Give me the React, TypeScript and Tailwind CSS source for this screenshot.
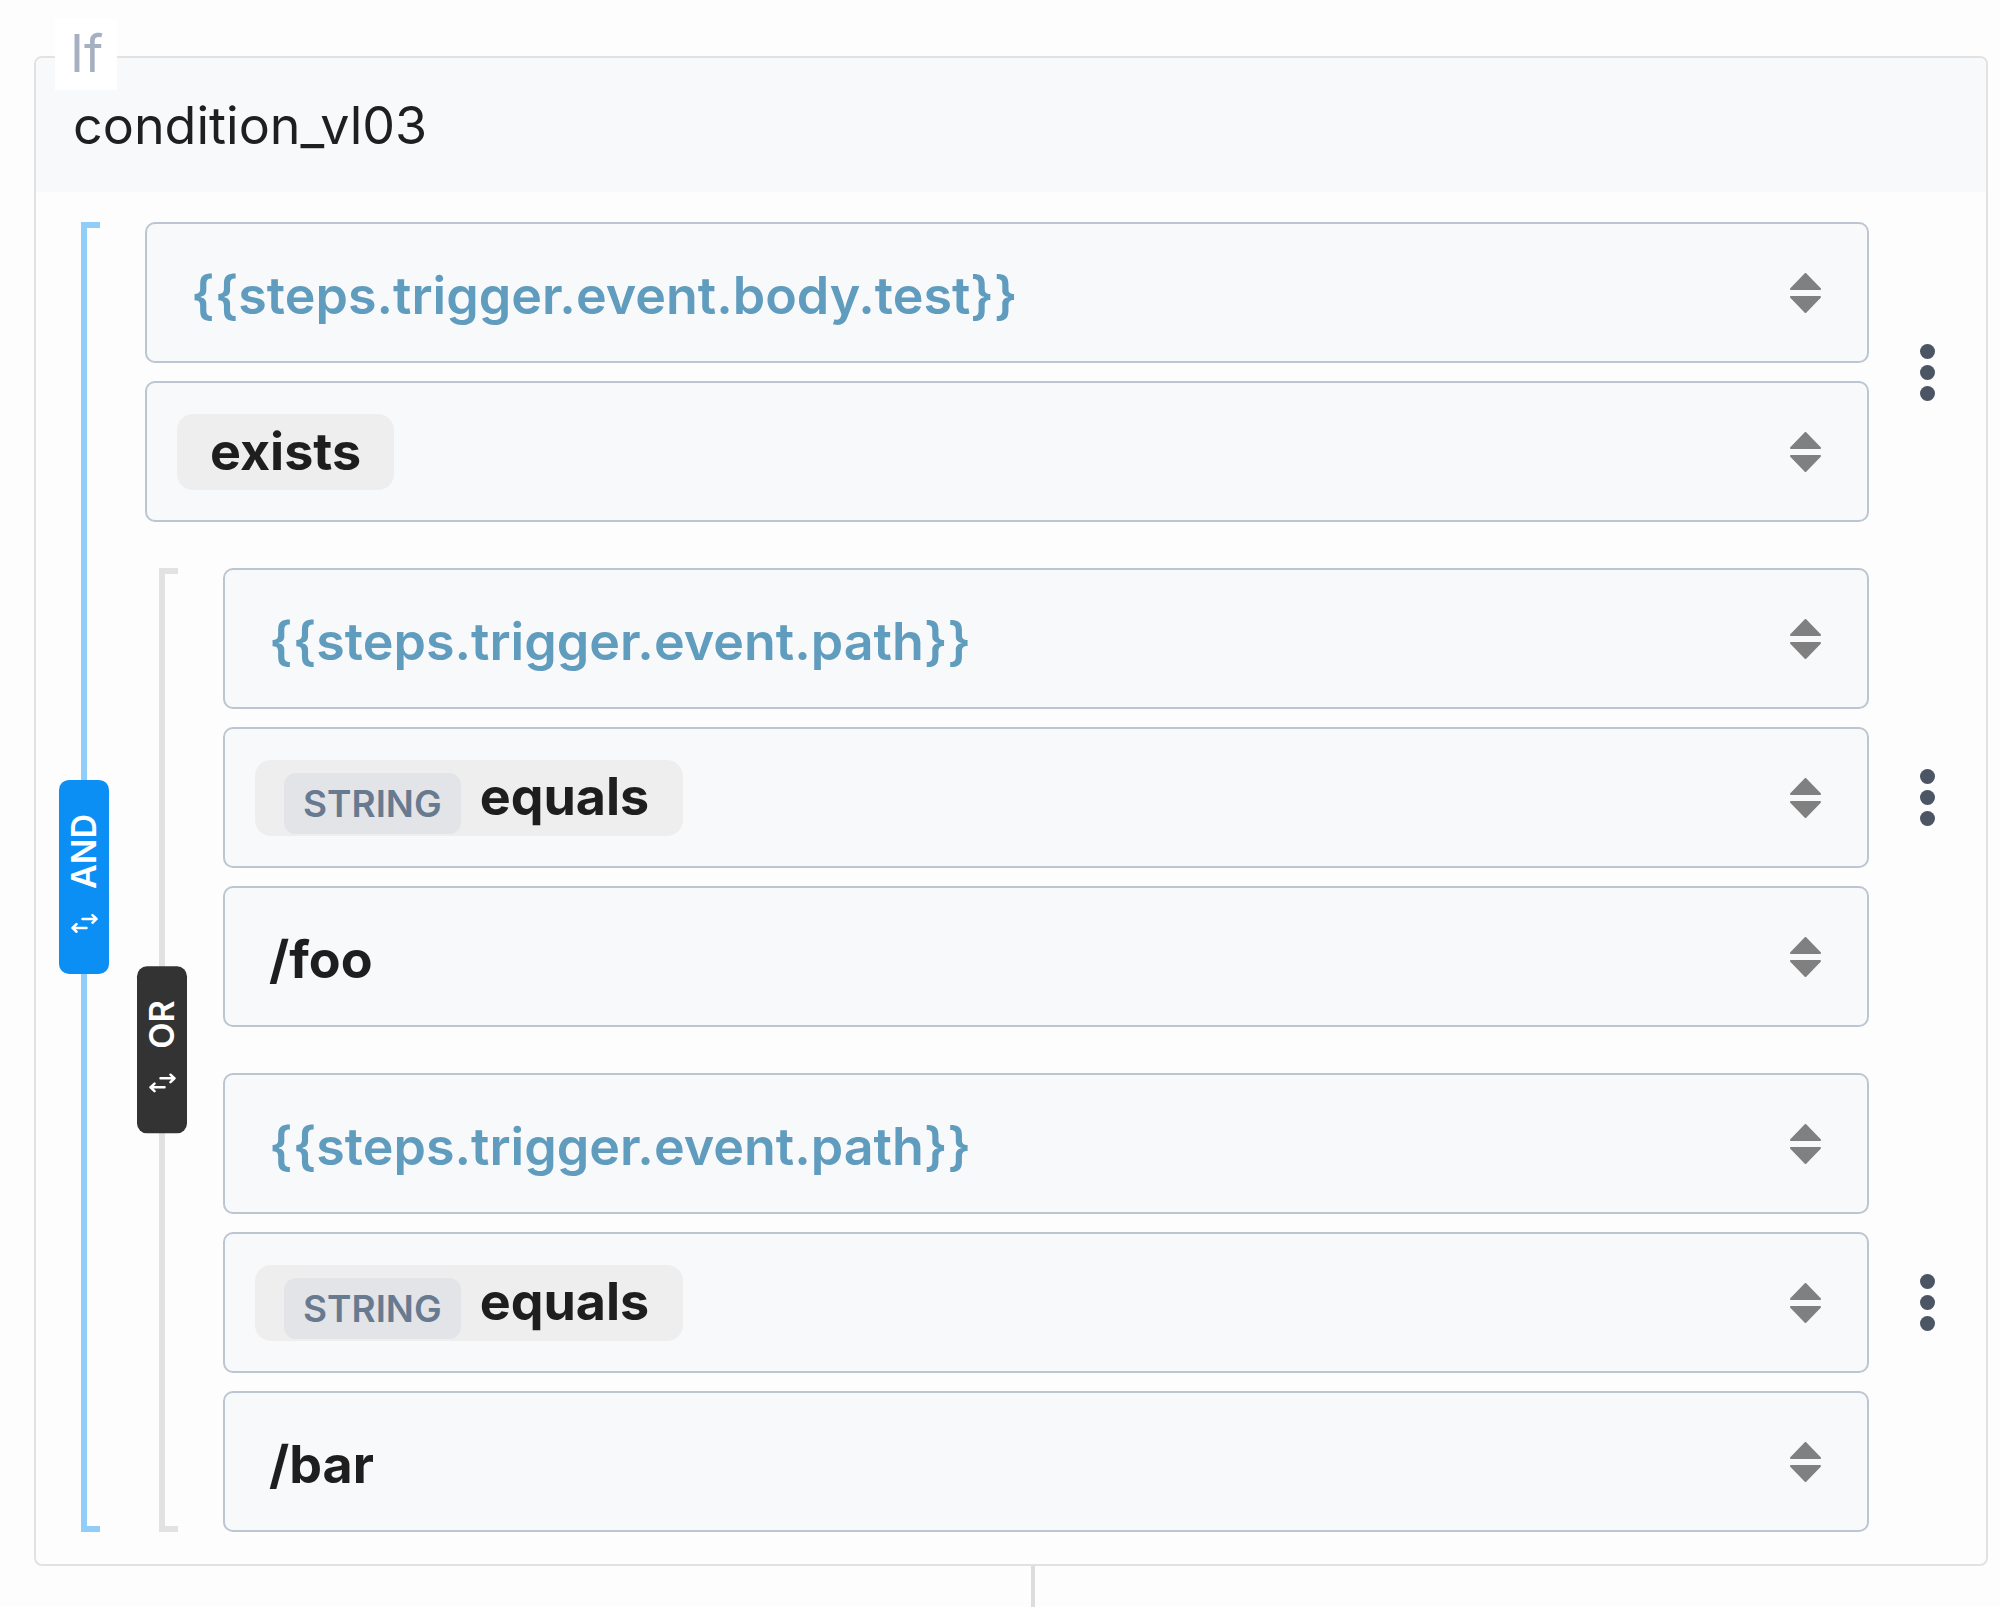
import React from "react";

const Chevrons = () => (
  <svg width="31" height="40" viewBox="0 0 31 40" className="shrink-0">
    <path d="M15.5 1 L30 16 L1 16 Z" fill="#808080" stroke="#808080" strokeWidth="2" strokeLinejoin="round" />
    <path d="M1 24 L30 24 L15.5 39 Z" fill="#808080" stroke="#808080" strokeWidth="2" strokeLinejoin="round" />
  </svg>
);

const SwapIcon = () => (
  <svg width="27" height="20" viewBox="0 0 27 20" fill="none" stroke="white" strokeWidth="2.5" strokeLinecap="round" strokeLinejoin="round" className="shrink-0">
    <path d="M11.5 5H25.5M21.5 1.2L25.5 5L21.5 8.8" />
    <path d="M15.5 14H1.5M5.5 10.2L1.5 14L5.5 17.8" />
  </svg>
);

const Dots = () => (
  <div className="w-[117px] shrink-0 flex flex-col items-center justify-center gap-[6px]">
    <div className="w-[15px] h-[15px] rounded-full bg-[#4b5563]" />
    <div className="w-[15px] h-[15px] rounded-full bg-[#4b5563]" />
    <div className="w-[15px] h-[15px] rounded-full bg-[#4b5563]" />
  </div>
);

const Field = ({ children }: { children: React.ReactNode }) => (
  <div className="h-[141px] border-2 border-[#bcc6d1] rounded-[10px] bg-[#f8f9fb] flex items-center justify-between pl-[30px] pr-[46px]">
    <div className="flex items-center">{children}</div>
    <Chevrons />
  </div>
);

const Expr = ({ text }: { text: string }) => (
  <span className="pl-[14px] pt-[7px] text-[52px] leading-[66px] font-semibold text-[#609cbd]">{text}</span>
);

const Plain = ({ text }: { text: string }) => (
  <span className="pl-[14px] pt-[7px] text-[52px] leading-[66px] font-bold text-[#1e1e1e]">{text}</span>
);

const Exists = () => (
  <div className="h-[76px] px-[33px] rounded-[16px] bg-[#eeeeee] flex items-center">
    <span className="text-[52px] leading-[66px] font-bold text-[#1e1e1e]">exists</span>
  </div>
);

const StringEquals = () => (
  <div className="h-[76px] pb-[2px] pl-[29px] pr-[34px] gap-[19px] rounded-[16px] bg-[#eeeeee] flex items-end">
    <div className="h-[61px] px-[19px] rounded-[12px] bg-[#e2e4e8] flex items-center">
      <span className="text-[37px] leading-[45px] font-semibold text-[#687a8f]">STRING</span>
    </div>
    <span className="self-center text-[52px] leading-[66px] font-bold text-[#1e1e1e]">equals</span>
  </div>
);

const Badge = ({ label, bg }: { label: string; bg: string }) => (
  <div className={`absolute left-0 top-1/2 -translate-y-1/2 w-[50px] rounded-[10px] ${bg} flex flex-col items-center pt-[34px] pb-[40px] gap-[25px]`}>
    <span className="[writing-mode:vertical-rl] rotate-180 text-white font-semibold text-[34px] leading-[50px]">{label}</span>
    <SwapIcon />
  </div>
);

const Group = ({
  label,
  lineColor,
  badgeBg,
  children,
}: {
  label: string;
  lineColor: string;
  badgeBg: string;
  children: React.ReactNode;
}) => (
  <div className="flex gap-[28px]">
    <div className="relative w-[50px] shrink-0">
      <div className={`ml-[22px] h-full w-[19px] border-y-[6px] border-l-[6px] ${lineColor}`} />
      <Badge label={label} bg={badgeBg} />
    </div>
    <div className="flex-1 min-w-0 flex flex-col gap-[46px]">{children}</div>
  </div>
);

const Rule = ({ children }: { children: React.ReactNode }) => (
  <div className="flex">
    <div className="flex-1 min-w-0 ml-[8px] flex flex-col gap-[18px]">{children}</div>
    <Dots />
  </div>
);

export default function App() {
  return (
    <div className="min-h-screen bg-[#fdfdfd] pt-[56px] pl-[34px] pr-[12px] font-['Inter',sans-serif]">
      <div className="relative border-2 border-[#e2e2e2] rounded-[8px]">
        <div className="absolute z-10 left-[19px] top-[-40px] h-[72px] w-[62px] bg-white pl-[15px] text-[52px] leading-[72px] text-[#a5b1c0]">
          If
        </div>
        <div className="h-[134px] pt-[38px] pl-[37px] bg-[#f8f9fa] rounded-t-[6px] text-[52px] leading-[60px] text-[#1f1f1f]">
          condition_vl03
        </div>
        <div className="pt-[30px] pb-[32px] pl-[23px]">
          <Group label="AND" lineColor="border-[#90cdf9]" badgeBg="bg-[#0b8ff5]">
            <Rule>
              <Field>
                <Expr text="{{steps.trigger.event.body.test}}" />
              </Field>
              <Field>
                <Exists />
              </Field>
            </Rule>
            <Group label="OR" lineColor="border-[#e2e2e2]" badgeBg="bg-[#333333]">
              <Rule>
                <Field>
                  <Expr text="{{steps.trigger.event.path}}" />
                </Field>
                <Field>
                  <StringEquals />
                </Field>
                <Field>
                  <Plain text="/foo" />
                </Field>
              </Rule>
              <Rule>
                <Field>
                  <Expr text="{{steps.trigger.event.path}}" />
                </Field>
                <Field>
                  <StringEquals />
                </Field>
                <Field>
                  <Plain text="/bar" />
                </Field>
              </Rule>
            </Group>
          </Group>
        </div>
      </div>
      <div className="ml-[997px] w-[4px] h-[41px] bg-[#dddddd]" />
    </div>
  );
}
